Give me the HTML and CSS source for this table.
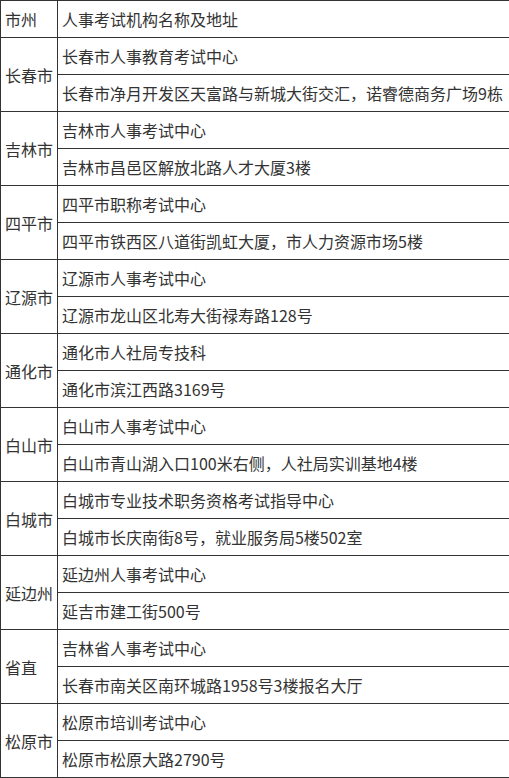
FILE: index.html
```html
<!DOCTYPE html>
<html lang="zh-CN">
<head>
<meta charset="utf-8">
<title>人事考试机构名称及地址</title>
<link rel="stylesheet" href="styles.css">
</head>
<body>
<table class="addr">
<colgroup><col class="c1"><col class="c2"></colgroup>
<tbody>
<tr><td>市州</td><td>人事考试机构名称及地址</td></tr>
<tr><td rowspan="2">长春市</td><td>长春市人事教育考试中心</td></tr>
<tr><td>长春市净月开发区天富路与新城大街交汇，诺睿德商务广场9栋</td></tr>
<tr><td rowspan="2">吉林市</td><td>吉林市人事考试中心</td></tr>
<tr><td>吉林市昌邑区解放北路人才大厦3楼</td></tr>
<tr><td rowspan="2">四平市</td><td>四平市职称考试中心</td></tr>
<tr><td>四平市铁西区八道街凯虹大厦，市人力资源市场5楼</td></tr>
<tr><td rowspan="2">辽源市</td><td>辽源市人事考试中心</td></tr>
<tr><td>辽源市龙山区北寿大街禄寿路128号</td></tr>
<tr><td rowspan="2">通化市</td><td>通化市人社局专技科</td></tr>
<tr><td>通化市滨江西路3169号</td></tr>
<tr><td rowspan="2">白山市</td><td>白山市人事考试中心</td></tr>
<tr><td>白山市青山湖入口100米右侧，人社局实训基地4楼</td></tr>
<tr><td rowspan="2">白城市</td><td>白城市专业技术职务资格考试指导中心</td></tr>
<tr><td>白城市长庆南街8号，就业服务局5楼502室</td></tr>
<tr><td rowspan="2">延边州</td><td>延边州人事考试中心</td></tr>
<tr><td>延吉市建工街500号</td></tr>
<tr><td rowspan="2">省直</td><td>吉林省人事考试中心</td></tr>
<tr><td>长春市南关区南环城路1958号3楼报名大厅</td></tr>
<tr><td rowspan="2">松原市</td><td>松原市培训考试中心</td></tr>
<tr><td>松原市松原大路2790号</td></tr>
</tbody>
</table>
</body>
</html>
```
FILE: styles.css
```css
html, body {
  margin: 0;
  padding: 0;
  background: #fff;
}
.addr {
  border-collapse: collapse;
  width: 509px;
  table-layout: fixed;
  font-family: "Microsoft YaHei", "Noto Sans CJK SC", "Noto Sans", sans-serif;
  font-size: 16px;
  line-height: 20px;
  color: #333;
}
.c1 { width: 57px; }
.c2 { width: 452px; }
.addr td {
  border: 1px solid #333;
  height: 36px;
  padding: 0 0 0 4px;
  vertical-align: middle;
  white-space: nowrap;
  overflow: hidden;
}
```
